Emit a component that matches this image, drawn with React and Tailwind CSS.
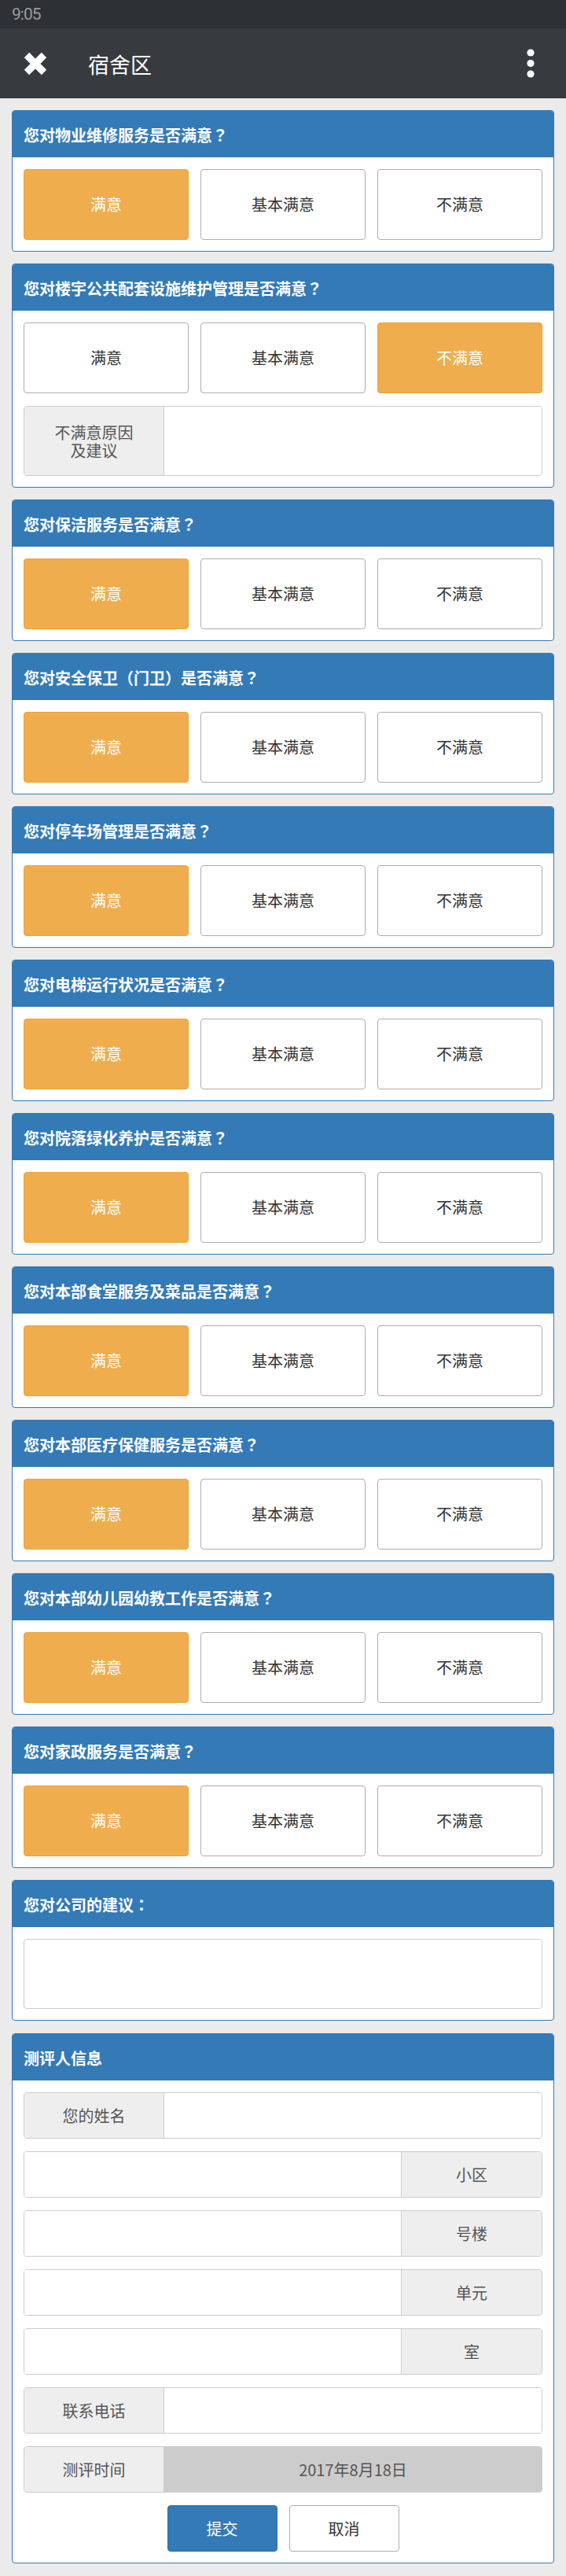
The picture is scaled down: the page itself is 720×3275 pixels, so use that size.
import React from "react";

const CJK = { fontFamily: '"Noto Sans CJK SC", "Noto Sans", sans-serif' };
const TC = { fontFamily: '"Noto Sans CJK TC", "Noto Sans CJK SC", sans-serif' };

const questions = [
  { title: "您对物业维修服务是否满意？", sel: 0 },
  { title: "您对楼宇公共配套设施维护管理是否满意？", sel: 2, reason: true },
  { title: "您对保洁服务是否满意？", sel: 0 },
  { title: "您对安全保卫（门卫）是否满意？", sel: 0 },
  { title: "您对停车场管理是否满意？", sel: 0 },
  { title: "您对电梯运行状况是否满意？", sel: 0 },
  { title: "您对院落绿化养护是否满意？", sel: 0 },
  { title: "您对本部食堂服务及菜品是否满意？", sel: 0 },
  { title: "您对本部医疗保健服务是否满意？", sel: 0 },
  { title: "您对本部幼儿园幼教工作是否满意？", sel: 0 },
  { title: "您对家政服务是否满意？", sel: 0 },
];

const options = ["满意", "基本满意", "不满意"];

function Title({ text }) {
  const parts = [];
  let buf = "";
  for (const ch of text) {
    if ("？（）：".includes(ch)) {
      if (buf) parts.push(buf);
      buf = "";
      parts.push(
        <span key={parts.length} style={TC}>
          {ch}
        </span>
      );
    } else buf += ch;
  }
  if (buf) parts.push(buf);
  return <>{parts}</>;
}

function PanelHeader({ children }) {
  return (
    <div className="h-[59px] bg-[#337ab7] flex items-center pl-[14px] pt-[2px]">
      <span className="text-white font-bold text-[20px] leading-[24px]">
        <Title text={children} />
      </span>
    </div>
  );
}

function Panel({ title, children, className = "" }) {
  return (
    <div className={"border border-[#337ab7] rounded-[4px] bg-white overflow-hidden " + className}>
      <PanelHeader>{title}</PanelHeader>
      <div className="px-[14px] pt-[15px] pb-[14px]">{children}</div>
    </div>
  );
}

function Choice({ label, active }) {
  return active ? (
    <div className="h-[90px] rounded-[4px] bg-[#f0ad4e] border border-[#eea236] flex items-center justify-center text-white text-[20px] leading-[24px]">
      {label}
    </div>
  ) : (
    <div className="h-[90px] rounded-[4px] bg-white border border-[#adadad] flex items-center justify-center text-[#333] text-[20px] leading-[24px]">
      {label}
    </div>
  );
}

function LabelLeftRow({ label, children, h = "h-[59px]" }) {
  return (
    <div className={"flex border border-[#ccc] rounded-[4px] overflow-hidden " + h}>
      <div className="w-[178px] shrink-0 bg-[#eee] border-r border-[#ccc] flex items-center justify-center text-center text-[#555] text-[20px] leading-[23px]">
        {label}
      </div>
      {children || <div className="flex-1 bg-white" />}
    </div>
  );
}

function LabelRightRow({ label }) {
  return (
    <div className="flex h-[59px] border border-[#ccc] rounded-[4px] overflow-hidden">
      <div className="flex-1 bg-white" />
      <div className="w-[179px] shrink-0 bg-[#eee] border-l border-[#ccc] flex items-center justify-center text-[#555] text-[20px] leading-[24px]">
        {label}
      </div>
    </div>
  );
}

export default function App() {
  return (
    <div className="w-[720px] bg-[#ebebeb]" style={CJK}>
      {/* status bar */}
      <div className="h-[36px] bg-[#2d3034] flex items-center pl-[15px]">
        <span
          className="text-[#9a9c9e] text-[21px] tracking-[-1px] leading-none"
          style={{ fontFamily: 'Roboto, "Noto Sans", sans-serif' }}
        >
          9:05
        </span>
      </div>
      {/* app bar */}
      <div className="h-[89px] bg-[#373a3e] flex items-center relative">
        <svg className="ml-[30px] shrink-0" width="30" height="30" viewBox="0 0 30 30">
          <path d="M4 4 L26 26 M26 4 L4 26" stroke="white" strokeWidth="9" />
        </svg>
        <span className="ml-[52px] text-white text-[27px] leading-[32px] pt-[2px]">宿舍区</span>
        <svg className="ml-auto mr-[40px] shrink-0" width="10" height="38" viewBox="0 0 10 38">
          <circle cx="5" cy="5" r="4.6" fill="white" />
          <circle cx="5" cy="18.5" r="4.6" fill="white" />
          <circle cx="5" cy="32" r="4.6" fill="white" />
        </svg>
      </div>

      {/* content */}
      <div className="px-[15px] pt-[15px] pb-[16px] flex flex-col gap-[15px]">
        {questions.map((q, i) => (
          <Panel key={i} title={q.title}>
            <div className="grid grid-cols-3 gap-[15px]">
              {options.map((o, j) => (
                <Choice key={j} label={o} active={j === q.sel} />
              ))}
            </div>
            {q.reason && (
              <div className="mt-[16px]">
                <LabelLeftRow
                  h="h-[89px]"
                  label={
                    <span>
                      不满意原因
                      <br />
                      及建议
                    </span>
                  }
                />
              </div>
            )}
          </Panel>
        ))}

        <Panel title="您对公司的建议：">
          <div className="h-[89px] border border-[#ccc] rounded-[4px] bg-white" />
        </Panel>

        <Panel title="测评人信息" className="mt-[1px]">
          <div className="flex flex-col gap-[16px]">
            <LabelLeftRow label="您的姓名" />
            <LabelRightRow label="小区" />
            <LabelRightRow label="号楼" />
            <LabelRightRow label="单元" />
            <LabelRightRow label="室" />
            <LabelLeftRow label="联系电话" />
            <LabelLeftRow label="测评时间">
              <div className="flex-1 bg-[#ccc] flex items-center justify-center text-[#555] text-[20px] leading-[24px]">
                2017年8月18日
              </div>
            </LabelLeftRow>
          </div>
          <div className="mt-[16px] flex justify-center gap-[15px]">
            <div className="w-[140px] h-[59px] rounded-[4px] bg-[#337ab7] border border-[#2e6da4] flex items-center justify-center text-white text-[20px] leading-[24px]">
              提交
            </div>
            <div className="w-[140px] h-[59px] rounded-[4px] bg-white border border-[#adadad] flex items-center justify-center text-[#333] text-[20px] leading-[24px]">
              取消
            </div>
          </div>
        </Panel>
      </div>
    </div>
  );
}
